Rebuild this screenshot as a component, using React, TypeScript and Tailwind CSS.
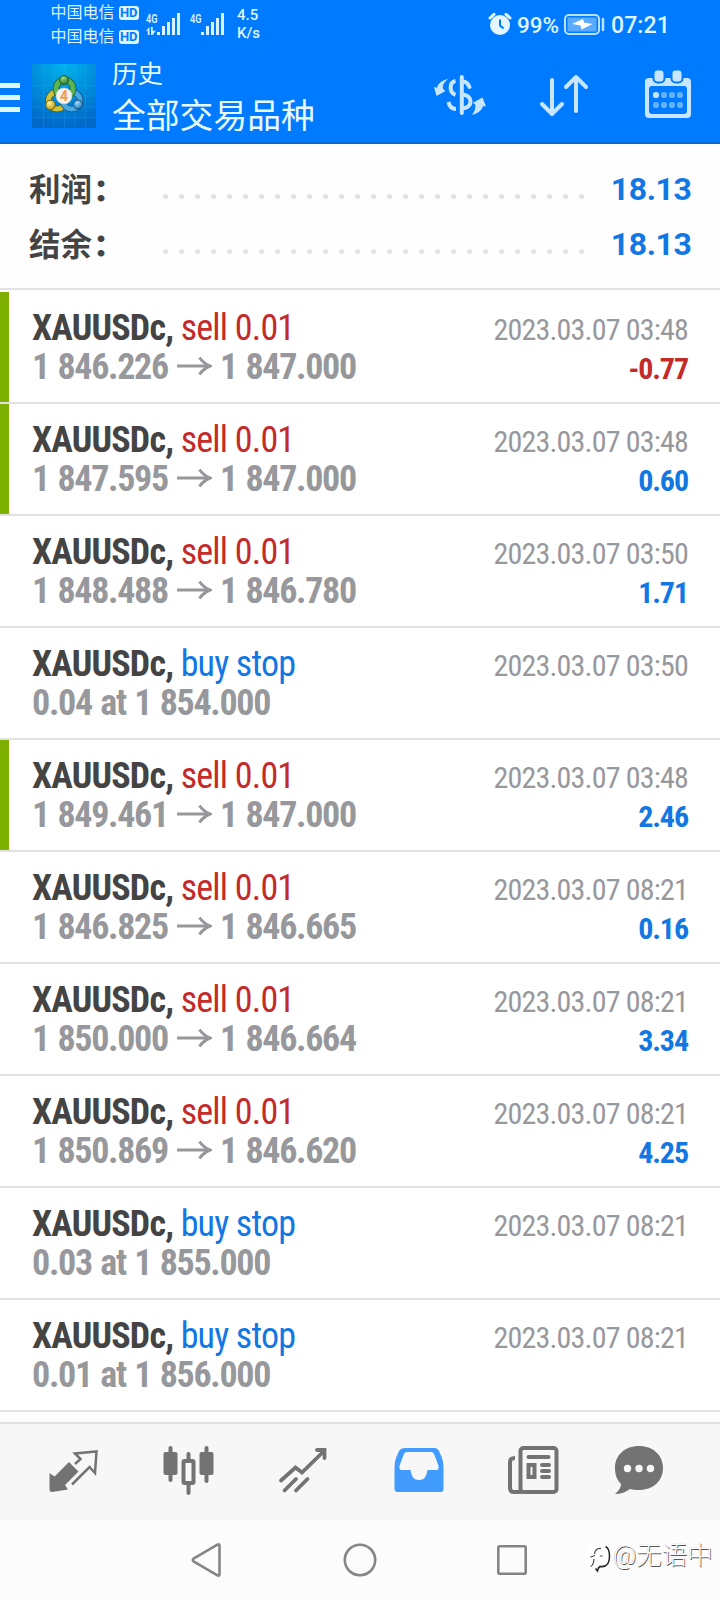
import React from "react";

type Row = {
  side: string;
  buy?: boolean;
  from?: string;
  to?: string;
  note?: string;
  date: string;
  profit?: string;
  marked?: boolean;
};

const rows: Row[] = [
  { side: "sell 0.01", from: "1 846.226", to: "1 847.000", date: "2023.03.07 03:48", profit: "-0.77", marked: true },
  { side: "sell 0.01", from: "1 847.595", to: "1 847.000", date: "2023.03.07 03:48", profit: "0.60", marked: true },
  { side: "sell 0.01", from: "1 848.488", to: "1 846.780", date: "2023.03.07 03:50", profit: "1.71" },
  { side: "buy stop", buy: true, note: "0.04 at 1 854.000", date: "2023.03.07 03:50" },
  { side: "sell 0.01", from: "1 849.461", to: "1 847.000", date: "2023.03.07 03:48", profit: "2.46", marked: true },
  { side: "sell 0.01", from: "1 846.825", to: "1 846.665", date: "2023.03.07 08:21", profit: "0.16" },
  { side: "sell 0.01", from: "1 850.000", to: "1 846.664", date: "2023.03.07 08:21", profit: "3.34" },
  { side: "sell 0.01", from: "1 850.869", to: "1 846.620", date: "2023.03.07 08:21", profit: "4.25" },
  { side: "buy stop", buy: true, note: "0.03 at 1 855.000", date: "2023.03.07 08:21" },
  { side: "buy stop", buy: true, note: "0.01 at 1 856.000", date: "2023.03.07 08:21" },
];

function Carrier() {
  return (
    <div className="flex h-[24px] items-center gap-[4px]">
      <span className="text-[16px] leading-[24px]">中国电信</span>
      <span className="flex h-[14px] w-[20px] items-center justify-center rounded-[3px] bg-[#e0f4ff] text-[13px] font-bold leading-[14px] tracking-[-0.3px] text-[#007aff]">HD</span>
    </div>
  );
}

function Signal({ data }: { data?: boolean }) {
  return (
    <svg className="h-[24px] w-[36px] overflow-visible" viewBox="0 0 36 24" fill="#d8f2ff">
      <text x="1" y="9.500" fontSize="13" fontWeight="600" textLength="11.500" lengthAdjust="spacingAndGlyphs">4G</text>
      {data && <path d="M.5 18.500l4-4.500v8H2.800v-4.500zM6 14h1.800v4L11 17.500l-3.500 4.500H6z" />}
      <rect x="12" y="19" width="3" height="3" />
      <rect x="17" y="13" width="3" height="9" />
      <rect x="22" y="9" width="3" height="13" />
      <rect x="27" y="5" width="3" height="17" />
      <rect x="32" y="0" width="3" height="22" />
    </svg>
  );
}

function StatusBar() {
  return (
    <div className="flex h-[48px] pl-[50.500px] text-[#dff5ff]">
      <div className="flex w-[94.500px] flex-col pt-[1px]">
        <Carrier />
        <Carrier />
      </div>
      <div className="flex gap-[8px] pt-[13px]">
        <Signal data />
        <Signal />
      </div>
      <div className="ml-[12px] w-[80px] pt-[6px] text-[15px] font-medium leading-[18px]">
        <div>4.5</div>
        <div>K/s</div>
      </div>
      <svg className="ml-[171px] mt-[12px] h-[24px] w-[24px] shrink-0" viewBox="0 0 24 24" fill="none">
        <circle cx="12" cy="13" r="10" fill="#e4f6ff" />
        <path d="M12 7.500v6l3.500 3" stroke="#007aff" strokeWidth="2" />
        <path d="M2 6l4-3.700M22 6l-4-3.700" stroke="#e4f6ff" strokeWidth="3" strokeLinecap="round" />
      </svg>
      <span className="ml-[5px] w-[47px] shrink-0 pt-[11px] text-[22.500px] font-medium leading-[28px]">99%</span>
      <svg className="mt-[13px] h-[23px] w-[41px] shrink-0" viewBox="0 0 41 23" fill="none">
        <rect x="1" y="2" width="34" height="19" rx="4" stroke="#b8e2ff" strokeWidth="2" />
        <rect x="3.500" y="4.500" width="29" height="14" rx="1" fill="#5aabff" />
        <path d="M8 11l11-5 1 3.500 8.500 1.500-11 5.500-1-4z" fill="#fff" />
        <path d="M39 6v11" stroke="#b8e2ff" strokeWidth="2.500" strokeLinecap="round" />
      </svg>
      <span className="ml-[6px] pt-[11px] text-[23.200px] font-medium leading-[28px]">07:21</span>
    </div>
  );
}

function Logo() {
  return (
    <svg className="h-[64px] w-[64px] shrink-0" viewBox="0 0 64 64" fill="none">
      <defs>
        <radialGradient id="bg" cx="50%" cy="0%" r="100%">
          <stop offset="0" stopColor="#00b4ee" />
          <stop offset="1" stopColor="#0068c8" />
        </radialGradient>
        <radialGradient id="green" cx="40%" cy="30%" r="70%">
          <stop offset="0" stopColor="#9bd884" />
          <stop offset="1" stopColor="#22802e" />
        </radialGradient>
        <radialGradient id="gold" cx="40%" cy="30%" r="70%">
          <stop offset="0" stopColor="#fff29a" />
          <stop offset="1" stopColor="#b89a14" />
        </radialGradient>
        <radialGradient id="blue" cx="40%" cy="30%" r="70%">
          <stop offset="0" stopColor="#a5defa" />
          <stop offset="1" stopColor="#1a78c0" />
        </radialGradient>
      </defs>
      <rect width="64" height="64" fill="url(#bg)" />
      <path d="M11.500 0v64M22 0v64M32.500 0v64M43 0v64M53.500 0v64M0 21.500h64M0 32h64M0 43h64M0 53.500h64" stroke="#48b8f2" strokeOpacity=".18" />
      <circle cx="25" cy="36.500" r="8.500" stroke="#3b5a20" strokeWidth="6.500" />
      <circle cx="25" cy="36.500" r="8.500" stroke="#d0c03a" strokeWidth="5" />
      <circle cx="39.500" cy="36.500" r="8.500" stroke="#124e80" strokeWidth="6.500" />
      <circle cx="39.500" cy="36.500" r="8.500" stroke="#4aa8e0" strokeWidth="5" />
      <circle cx="32.500" cy="24.500" r="8.500" stroke="#175a25" strokeWidth="6.500" />
      <circle cx="32.500" cy="24.500" r="8.500" stroke="#5cb554" strokeWidth="5" />
      <circle cx="32" cy="16" r="4.500" fill="url(#green)" stroke="#175a25" />
      <circle cx="18.500" cy="41" r="4.800" fill="url(#gold)" stroke="#6f6414" />
      <circle cx="46" cy="40.500" r="4.500" fill="url(#blue)" stroke="#124e80" />
      <circle cx="32" cy="32" r="8" fill="#f2f2ee" stroke="#c9cfc4" strokeWidth=".6" />
      <text x="32" y="36.800" fontSize="14" fontWeight="700" textAnchor="middle" fill="#f09a55">4</text>
    </svg>
  );
}

function AppBar() {
  return (
    <div className="flex h-[96px] items-start border-b-2 border-[#0a6ad2] text-[#e6faff]">
      <div className="mt-[35px] flex w-[20px] shrink-0 flex-col gap-[7px]">
        <span className="h-[5px] bg-[#def7ff]" />
        <span className="h-[5px] bg-[#def7ff]" />
        <span className="h-[5px] bg-[#def7ff]" />
      </div>
      <div className="ml-[12px] mt-[16px]">
        <Logo />
      </div>
      <div className="ml-[16px] w-[320px] shrink-0 pt-[9px]">
        <div className="text-[25.500px] leading-[34px]">历史</div>
        <div className="pt-[3px] text-[33.800px] leading-[46px]">全部交易品种</div>
      </div>
      <svg className="mt-[24px] h-[46px] w-[56px] shrink-0" viewBox="432 72 56 46" fill="none" stroke="#c8e6ff" strokeWidth="4">
        <path d="M461.800 77v36" strokeLinecap="round" />
        <path d="M455.500 81c-6 1-7 11 0 14M448.500 102c1 5 4 7 7.500 7" />
        <path d="M463 81.500c3.500 0 5 2 6.500 5.500" strokeLinecap="round" />
        <path d="M463 94.500c10 2 10 12 0 14" />
        <g fill="#c8e6ff" stroke="none">
          <path d="M448 79c-5 4-6 8-4.500 10.500l2 1.500-9 5-2.500-9 3 .7c1-4 5-7.500 11-8.700z" />
          <path d="M472 115c3-4 4-8 3-11l-2.500-1 10-5.500 3.500 9-3-.5c-1 4-5 7.500-11 9z" />
        </g>
      </svg>
      <svg className="ml-[50px] mt-[24px] h-[46px] w-[52px] shrink-0" viewBox="538 72 52 46" fill="none" stroke="#c8e6ff" strokeWidth="4" strokeLinecap="round" strokeLinejoin="round">
        <path d="M552 80v34M542 104l10 10 10-10M576 111V77M566 87l10-10 10 10" />
      </svg>
      <svg className="ml-[54px] mt-[22px] h-[50px] w-[48px] shrink-0" viewBox="644 70 48 50">
        <rect x="645" y="78" width="46" height="40" rx="4" fill="#c8e6ff" />
        <rect x="649" y="86" width="38" height="28" rx="3" fill="#007aff" />
        <rect x="653.500" y="69.500" width="11" height="13" rx="4" fill="#c8e6ff" stroke="#007aff" strokeWidth="2" />
        <rect x="671.500" y="69.500" width="11" height="13" rx="4" fill="#c8e6ff" stroke="#007aff" strokeWidth="2" />
        <g fill="#64b2ff">
          <circle cx="656" cy="95" r="3.100" fill="#c8e6ff" />
          <circle cx="664" cy="95" r="3.100" />
          <circle cx="672" cy="95" r="3.100" />
          <circle cx="680" cy="95" r="3.100" />
          <circle cx="656" cy="105" r="3.100" />
          <circle cx="664" cy="105" r="3.100" />
          <circle cx="672" cy="105" r="3.100" />
          <circle cx="680" cy="105" r="3.100" />
        </g>
      </svg>
    </div>
  );
}

function Total({ label, value }: { label: string; value: string }) {
  return (
    <div className="flex h-[55px] items-center pl-[29px] pr-[28.500px] font-bold">
      <div className="flex w-[134px] items-baseline pt-[2px] text-[31.500px] leading-[40px] text-[#444]">
        {label}
        <span className="ml-[4px] text-[36px] leading-[40px] [-webkit-text-stroke:1px_#444]">:</span>
      </div>
      <div className="flex w-[421px] justify-between pt-[15px]">
        {Array.from({ length: 27 }, (_, i) => (
          <span key={i} className="h-[5px] w-[5px] rounded-full bg-[#e2e2e3]" />
        ))}
      </div>
      <div className="ml-auto text-[32px] leading-[40px] tracking-[-0.4px] text-[#1377e3]">{value}</div>
    </div>
  );
}

function Deal({ row }: { row: Row }) {
  return (
    <div className="flex h-[112px] border-b-2 border-[#e2e2e3] bg-white [font-family:'Roboto_Condensed',Roboto,sans-serif] [font-stretch:75%]">
      <div className={row.marked ? "w-[9px] bg-[#7db000]" : "w-[9px]"} />
      <div className="flex flex-1 justify-between pl-[23px] pr-[32px] pt-[17px]">
        <div className="whitespace-nowrap text-[36px] leading-[39px] tracking-[-0.8px]">
          <div className="text-[#444]">
            <span className="font-bold">XAUUSDc,</span>{" "}
            <span className={row.buy ? "text-[#1377e3]" : "text-[#c52a2a]"}>{row.side}</span>
          </div>
          <div className="flex font-bold tracking-[-1.3px] text-[#97989c] [word-spacing:1.5px]">
            {row.note ?? (
              <>
                <span className="w-[145px]">{row.from}</span>
                <svg className="mr-[8px] mt-[8px] h-[20px] w-[35px]" viewBox="0 0 35 20" fill="none" stroke="#97989c" strokeWidth="3">
                  <path d="M0 10h33M22.500 1.500Q26 7 33 10Q26 13 22.500 18.500" />
                </svg>
                <span>{row.to}</span>
              </>
            )}
          </div>
        </div>
        <div className="whitespace-nowrap pt-px text-right text-[30px] leading-[39px]">
          <div className="tracking-[-0.8px] text-[#97989c]">{row.date}</div>
          {row.profit && (
            <div className={row.profit.startsWith("-") ? "font-bold tracking-[-1.1px] text-[#c52a2a]" : "font-bold tracking-[-1.1px] text-[#1377e3]"}>{row.profit}</div>
          )}
        </div>
      </div>
    </div>
  );
}

function TabBar() {
  return (
    <div className="flex h-[98px] border-t-2 border-[#e2e2e3] bg-[#f7f7f7] pl-[46px] pt-[20px] text-[#737373]">
      <svg className="mr-[62px] h-[54px] w-[54px] shrink-0" viewBox="46 1444 54 54" fill="none">
        <path d="M49.500 1473l5 3.500 14.500-14.500 9.500 9.500-13.500 13.500 3 4.500-16 2.500q-2.500 0-2.500-2.500z" fill="#737373" />
        <path d="M75 1464l5.500-5-5.500-5.500 21.500-2-1.500 21.500-5.500-6-17.500 17.500" stroke="#737373" strokeWidth="2.500" />
      </svg>
      <svg className="mr-[62px] h-[54px] w-[54px] shrink-0" viewBox="162 1444 54 54" fill="none" stroke="#737373" strokeWidth="4" strokeLinecap="round">
        <path d="M170.500 1448v32M206.500 1448v33M188.500 1454v6M188.500 1484v9" />
        <rect x="163.500" y="1452" width="14" height="23" rx="2" fill="#737373" stroke="none" />
        <rect x="199.500" y="1452" width="14" height="23" rx="2" fill="#737373" stroke="none" />
        <rect x="183.500" y="1461" width="10" height="22" rx="1" />
      </svg>
      <svg className="mr-[62px] h-[54px] w-[54px] shrink-0" viewBox="278 1444 54 54" fill="none" stroke="#737373" strokeWidth="3.800">
        <path d="M281 1480.500l14.500-13 6.500 5 21-20.500" strokeLinecap="round" />
        <path d="M317 1450h7.500v8" strokeLinecap="round" />
        <path d="M284.500 1490.500l11.500-11.500M296 1490.500l11.500-11.500" strokeLinecap="round" />
      </svg>
      <svg className="mr-[58px] h-[54px] w-[54px] shrink-0" viewBox="393.500 1418 54 54" fill="none">
        <path fillRule="evenodd" d="M405 1422h29q3 0 4.500 3l3 7q1.500 4 1.500 9v22q0 3-3 3h-43q-3 0-3-3v-22q0-5 1.500-9l3-7q1.500-3 6.500-3zM406 1426q-2 0-3 3l-4 11q-.5 4 2 4h9q1 10 8.500 10t8.500-10h9q2.500 0 2-4l-4-11q-1-3-3-3z" fill="#429bff" />
      </svg>
      <svg className="mr-[52px] h-[54px] w-[54px] shrink-0" viewBox="506 1444 54 54" fill="none" stroke="#737373" strokeWidth="4" strokeLinecap="round">
        <rect x="520.500" y="1448" width="36" height="44" rx="3" />
        <path d="M515 1458q-5 0-5 4v26q0 4 4 4h8" strokeLinecap="butt" />
        <path d="M528.500 1457h20M542 1465h7M542 1471h7M542 1477h7" />
        <rect x="528.500" y="1465" width="6" height="12" strokeWidth="4" />
      </svg>
      <svg className="h-[54px] w-[54px] shrink-0" viewBox="612 1444 54 54">
        <path d="M639 1446c14 0 24 9 24 22s-10 22-24 22c-3 0-6-.2-9-1-4 3-9 5-15 5 4-3 6-7 6-10-4-4-6-9-6-16 0-13 10-22 24-22z" fill="#737373" />
        <circle cx="627.500" cy="1468.500" r="3.700" fill="#f7f7f7" />
        <circle cx="639" cy="1468.500" r="3.700" fill="#f7f7f7" />
        <circle cx="650.500" cy="1468.500" r="3.700" fill="#f7f7f7" />
      </svg>
    </div>
  );
}

function NavBar() {
  return (
    <div className="flex h-[80px] items-start bg-[#fcfcfc]">
      <svg className="ml-[191px] mt-[22px] h-[36px] w-[32px]" viewBox="190 1542 32 36" fill="none" stroke="#858585" strokeWidth="2.600" strokeLinejoin="round">
        <path d="M192.500 1558.700l24-14q2-1 2 1v28.600q0 2-2 1l-24-14q-1.500-1.300 0-2.600z" />
      </svg>
      <svg className="ml-[119px] mt-[22px] h-[36px] w-[36px]" viewBox="342 1542 36 36" fill="none" stroke="#858585" strokeWidth="2.600">
        <circle cx="360" cy="1560" r="15.200" />
      </svg>
      <svg className="ml-[117px] mt-[22px] h-[36px] w-[36px]" viewBox="495 1542 36 36" fill="none" stroke="#858585" strokeWidth="2.600">
        <rect x="498.300" y="1546.300" width="27.400" height="27.400" rx="1.500" />
      </svg>
      <svg className="ml-[54px] mt-[22px] h-[32px] w-[28px]" viewBox="585 1542 28 32" fill="none">
        <rect x="586" y="1543" width="24" height="24" rx="8" fill="#fff" />
        <path d="M605.500 1546.500q4 2 4 9.500 0 7-3.500 9.500-3 1.500-6 1-2 1-2.500 4.500l-2-2.500" stroke="#222" strokeWidth="1.500" />
        <path d="M590.500 1566.500q3-1 3.500-7.500M594.500 1554q1-6 6.500-5.500M590.500 1557l4.500-1.500M600 1556h2.500" stroke="#444" strokeWidth="1.200" />
      </svg>
      <span className="mt-[17px] whitespace-nowrap text-[25.500px] font-light leading-[36px] text-white [text-shadow:0.8px_0.8px_0_#555,-0.4px_-0.4px_0_#ccc]">@无语中</span>
    </div>
  );
}

export default function App() {
  return (
    <div className="flex h-[1600px] w-[720px] flex-col overflow-hidden bg-[#fefefe] [font-family:Roboto,'Noto_Sans_CJK_SC',sans-serif]">
      <header className="h-[144px] shrink-0 bg-[#007aff]">
        <StatusBar />
        <AppBar />
      </header>
      <section className="h-[146px] shrink-0 border-b-2 border-[#e2e2e3] pt-[17px]">
        <Total label="利润" value="18.13" />
        <Total label="结余" value="18.13" />
      </section>
      <main className="h-[1132px] shrink-0 pt-[2px]">
        {rows.map((row, i) => (
          <Deal key={i} row={row} />
        ))}
      </main>
      <TabBar />
      <NavBar />
    </div>
  );
}
